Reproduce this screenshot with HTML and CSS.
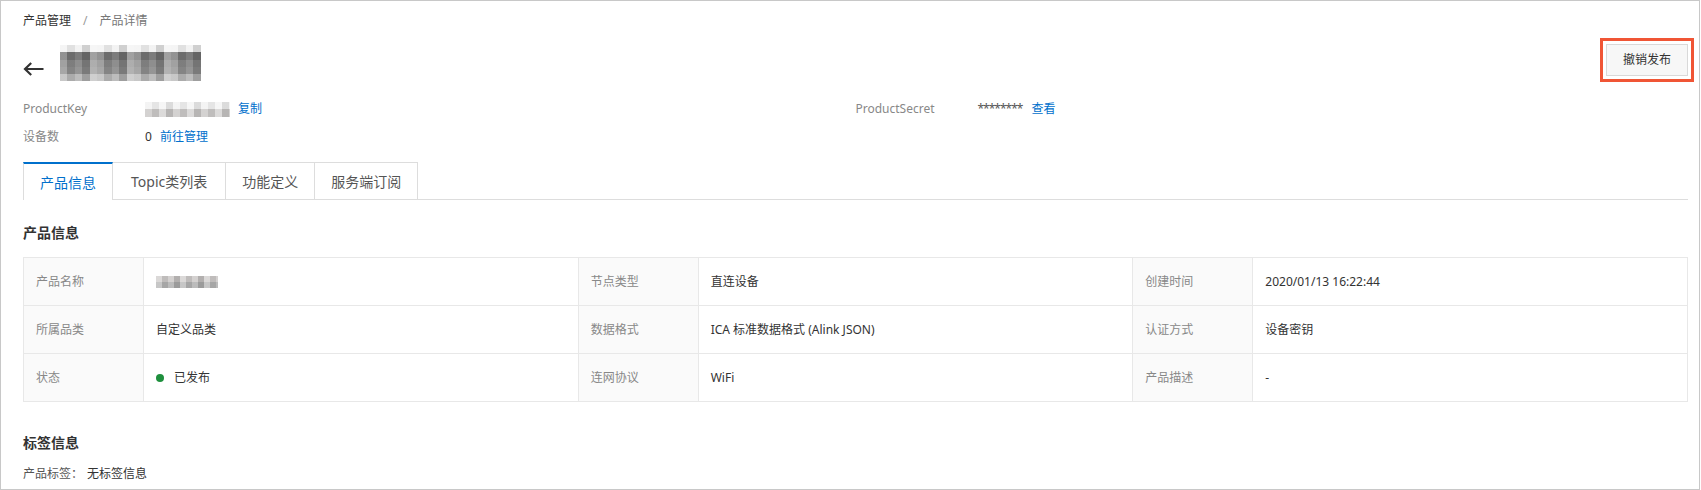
FILE: index.html
```html
<!DOCTYPE html>
<html lang="zh-CN">
<head>
<meta charset="utf-8">
<title>产品详情</title>
<link rel="stylesheet" href="styles.css">
</head>
<body>
<div class="page">
  <div class="breadcrumb">
    <span class="crumb">产品管理</span><span class="sep">/</span><span class="crumb current">产品详情</span>
  </div>

  <div class="title-row">
    <div class="title-left">
      <svg class="back" width="21" height="14" viewBox="0 0 21 14" aria-hidden="true">
        <path d="M2 7H20.5M8.2 1L2 7l6.2 6" fill="none" stroke="#333" stroke-width="2.2" stroke-linecap="butt" stroke-linejoin="miter"/>
      </svg>
      <div class="mosaic title-mosaic" role="img" aria-label="产品名称（已模糊处理）"></div>
    </div>
    <div class="btn-mark"><button class="btn">撤销发布</button></div>
  </div>

  <div class="info">
    <div class="info-item"><span class="info-label">ProductKey</span><span class="mosaic key-mosaic"></span><a class="link">复制</a></div>
    <div class="info-item"><span class="info-label">ProductSecret</span><span class="secret">********</span><a class="link">查看</a></div>
    <div class="info-item"><span class="info-label">设备数</span><span class="value">0</span><a class="link">前往管理</a></div>
  </div>

  <div class="tabs">
    <div class="tab active">产品信息</div>
    <div class="tab tab-wide">Topic类列表</div>
    <div class="tab">功能定义</div>
    <div class="tab">服务端订阅</div>
  </div>

  <h3 class="section-title">产品信息</h3>

  <table class="detail">
    <colgroup>
      <col class="c-label"><col><col class="c-label"><col><col class="c-label"><col>
    </colgroup>
    <tr>
      <td class="th">产品名称</td><td><span class="mosaic name-mosaic"></span></td>
      <td class="th">节点类型</td><td>直连设备</td>
      <td class="th">创建时间</td><td>2020/01/13 16:22:44</td>
    </tr>
    <tr>
      <td class="th">所属品类</td><td>自定义品类</td>
      <td class="th">数据格式</td><td>ICA 标准数据格式 (Alink JSON)</td>
      <td class="th">认证方式</td><td>设备密钥</td>
    </tr>
    <tr>
      <td class="th">状态</td><td><span class="status"><span class="dot"></span>已发布</span></td>
      <td class="th">连网协议</td><td>WiFi</td>
      <td class="th">产品描述</td><td>-</td>
    </tr>
  </table>

  <h3 class="section-title tags-title">标签信息</h3>
  <p class="tags"><span class="tags-label">产品标签：</span>无标签信息</p>
</div>
</body>
</html>
```

FILE: styles.css
```css
html, body {
  margin: 0;
  padding: 0;
  background: #fff;
}

body {
  font-family: "Noto Sans", "Noto Sans CJK SC", sans-serif;
  font-size: 12px;
  color: #333;
}

.page {
  width: 1700px;
  height: 490px;
  box-sizing: border-box;
  border: 1px solid #c8c8c8;
  padding: 10px 11px 0 22px;
  overflow: hidden;
}

/* breadcrumb */
.breadcrumb {
  line-height: 20px;
  height: 20px;
}
.crumb { color: #333; }
.crumb.current { color: #777; }
.sep {
  color: #999;
  margin: 0 12px;
}

/* title row */
.title-row {
  margin-top: 13px;
  display: flex;
  justify-content: space-between;
  align-items: flex-start;
  height: 37px;
}
.title-left {
  display: flex;
  align-items: flex-start;
}
.back {
  margin-top: 18px;
  margin-right: 16px;
  display: block;
}
.title-mosaic {
  margin-top: 1px;
}

.btn-mark {
  outline: 3px solid #f05535;
  outline-offset: 3px;
  display: flex;
}
.btn {
  font-family: inherit;
  font-size: 12px;
  color: #333;
  height: 32px;
  padding: 0 16px;
  background: #f7f7f7;
  border: 1px solid #d9d9d9;
  border-radius: 0;
  line-height: 30px;
  cursor: pointer;
}

/* mosaics (blurred data) */
.mosaic {
  display: inline-block;
}
.title-mosaic {
  width: 141px;
  height: 36px;
  background:
    repeating-linear-gradient(90deg,
      rgba(255,255,255,0.22) 0 7.4px,
      rgba(0,0,0,0.07) 7.4px 14.8px,
      rgba(255,255,255,0.06) 14.8px 22.2px,
      rgba(0,0,0,0.14) 22.2px 29.6px,
      rgba(255,255,255,0.32) 29.6px 37px),
    linear-gradient(180deg,
      #f2f2f2 0 7px,
      #747474 7px 15px,
      #878787 15px 22px,
      #8e8e8e 22px 29px,
      #b8b8b8 29px 36px);
}
.key-mosaic {
  width: 85px;
  height: 15px;
  background:
    repeating-linear-gradient(90deg,
      rgba(255,255,255,0.2) 0 7px,
      rgba(0,0,0,0.05) 7px 14px,
      rgba(255,255,255,0.35) 14px 21px,
      rgba(0,0,0,0.09) 21px 28px),
    linear-gradient(180deg, #f1f1f1 0 7px, #c9c7c6 7px 15px);
}
.name-mosaic {
  width: 62px;
  height: 12px;
  vertical-align: middle;
  background:
    repeating-linear-gradient(90deg,
      rgba(255,255,255,0.25) 0 6px,
      rgba(0,0,0,0.08) 6px 12px,
      rgba(255,255,255,0.1) 12px 18px,
      rgba(0,0,0,0.14) 18px 24px),
    linear-gradient(180deg, #cfcccb 0 6px, #b4b4b4 6px 12px);
}

/* info grid */
.info {
  margin-top: 18px;
  display: grid;
  grid-template-columns: 1fr 1fr;
  row-gap: 8px;
}
.info-item {
  display: flex;
  align-items: center;
  height: 20px;
  line-height: 20px;
}
.info-label {
  width: 122px;
  flex: none;
  color: #888;
}
.value { color: #333; }
.secret {
  color: #555;
  letter-spacing: -1px;
  margin-right: 1px;
}
.link {
  color: #0070cc;
  margin-left: 8px;
  cursor: pointer;
  text-decoration: none;
}

/* tabs */
.tabs {
  margin-top: 15px;
  display: flex;
  border-bottom: 1px solid #ddd;
}
.tab {
  box-sizing: border-box;
  height: 37px;
  padding: 0 16px;
  display: flex;
  align-items: center;
  font-size: 14px;
  color: #555;
  background: #fff;
  border-top: 1px solid #ddd;
  border-right: 1px solid #ddd;
}
.tab-wide {
  padding: 0 18px;
}
.tab:first-child {
  border-left: 1px solid #ddd;
}
.tab.active {
  color: #0070cc;
  border-top: 2px solid #0070cc;
  height: 38px;
  margin-bottom: -1px;
  padding-bottom: 1px;
}

/* section titles */
.section-title {
  margin: 23px 0 0;
  font-size: 14px;
  font-weight: bold;
  line-height: 20px;
  color: #333;
}

/* detail table */
.detail {
  margin-top: 14px;
  width: 100%;
  table-layout: fixed;
  border-collapse: collapse;
}
.c-label { width: 120px; }
.detail td {
  height: 48px;
  padding: 0 12px;
  border: 1px solid #e8e8e8;
  color: #333;
  line-height: 20px;
  box-sizing: border-box;
  vertical-align: middle;
}
.detail td.th {
  background: #fafafa;
  color: #888;
}
.status {
  display: inline-flex;
  align-items: center;
}
.dot {
  width: 8px;
  height: 8px;
  border-radius: 50%;
  background: #1e8f3d;
  margin-right: 10px;
}

.tags-title {
  margin-top: 31px;
}
.tags {
  margin: 11px 0 0;
  line-height: 20px;
  color: #333;
}
.tags-label {
  color: #555;
  margin-right: 4px;
}
```
